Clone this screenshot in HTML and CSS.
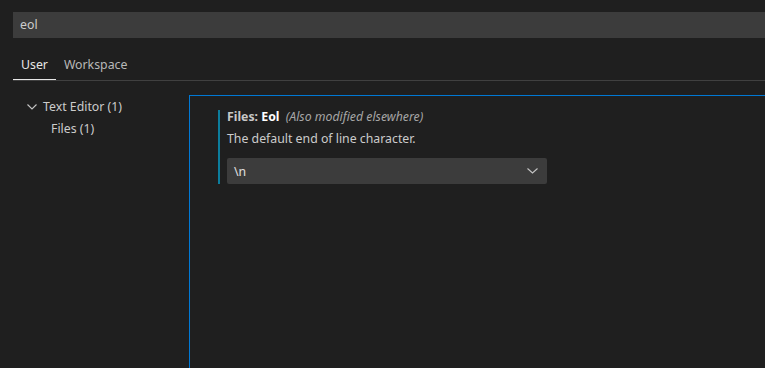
FILE: index.html
```html
<!DOCTYPE html>
<html lang="en">
  <head>
    <meta charset="UTF-8" />
    <link rel="stylesheet" href="styles.css">
    <title>Settings</title>
  </head>
  <body>
    <div class="search">eol</div>

    <ul class="tabs">
      <li class="tab active">User</li>
      <li class="tab">Workspace</li>
    </ul>

    <div class="main">
      <ul class="tree">
        <li class="node">
          <svg class="chev" width="10" height="6" viewBox="0 0 10 6">
            <path d="M0.5 0.5 L5 5 L9.5 0.5" fill="none" stroke="#c5c5c5" stroke-width="1.1" />
          </svg>
          Text Editor (1)
        </li>
        <li class="node child">Files (1)</li>
      </ul>

      <div class="panel">
        <div class="setting">
          <div class="title">
            <span class="cat">Files: </span><span class="label">Eol</span>
            <span class="modified">(Also modified elsewhere)</span>
          </div>
          <div class="desc">The default end of line character.</div>
          <div class="select">
            <span>\n</span>
            <svg width="11" height="6" viewBox="0 0 11 6">
              <path d="M0.5 0.5 L5.5 5 L10.5 0.5" fill="none" stroke="#c5c5c5" stroke-width="1.1" />
            </svg>
          </div>
        </div>
      </div>
    </div>
  </body>
</html>
```

FILE: styles.css
```css
* {
  box-sizing: border-box;
}

body {
  background-color: #1f1f1f;
  color: #cccccc;
  font-family: "Noto Sans", "Open Sans", sans-serif;
  font-size: 12.3px;
  margin: 0;
  height: 100vh;
  display: flex;
  flex-direction: column;
  overflow: hidden;
}

.search {
  margin: 12px 0 0 13px;
  height: 26px;
  line-height: 26px;
  padding-left: 7px;
  background-color: #3c3c3c;
  color: #cccccc;
}

.tabs {
  list-style: none;
  margin: 12px 0 0 13px;
  padding: 0;
  display: flex;
  border-bottom: 1px solid #404040;
}

.tab {
  padding: 0 8px;
  height: 30px;
  line-height: 30px;
  color: #b8b8b8;
}

.tab.active {
  color: #e7e7e7;
  border-bottom: 1px solid #e7e7e7;
  margin-bottom: -1px;
}

.main {
  flex: 1;
  display: flex;
  margin-top: 14px;
}

.tree {
  list-style: none;
  margin: 0;
  padding: 1px 0 0;
  width: 189px;
}

.node {
  height: 22px;
  line-height: 22px;
  padding-left: 27px;
  display: flex;
  align-items: center;
}

.chev {
  margin-right: 6px;
}

.node.child {
  padding-left: 51px;
}

.panel {
  flex: 1;
  border-top: 1px solid #0078d4;
  border-left: 1px solid #0078d4;
  padding: 14px 0 0 28px;
}

.setting {
  border-left: 2px solid #0c7d9d;
  padding-left: 7px;
}

.title {
  line-height: 14px;
  font-weight: bold;
}

.cat {
  color: #c8c8c8;
}

.label {
  color: #ffffff;
}

.modified {
  font-weight: normal;
  font-style: italic;
  color: #a6a6a6;
  margin-left: 3px;
}

.desc {
  margin-top: 6px;
  line-height: 18px;
}

.select {
  margin-top: 10px;
  width: 320px;
  height: 26px;
  background-color: #3c3c3c;
  border-radius: 2px;
  padding: 0 9px 0 7px;
  display: flex;
  align-items: center;
  justify-content: space-between;
  color: #e0e0e0;
}
```
